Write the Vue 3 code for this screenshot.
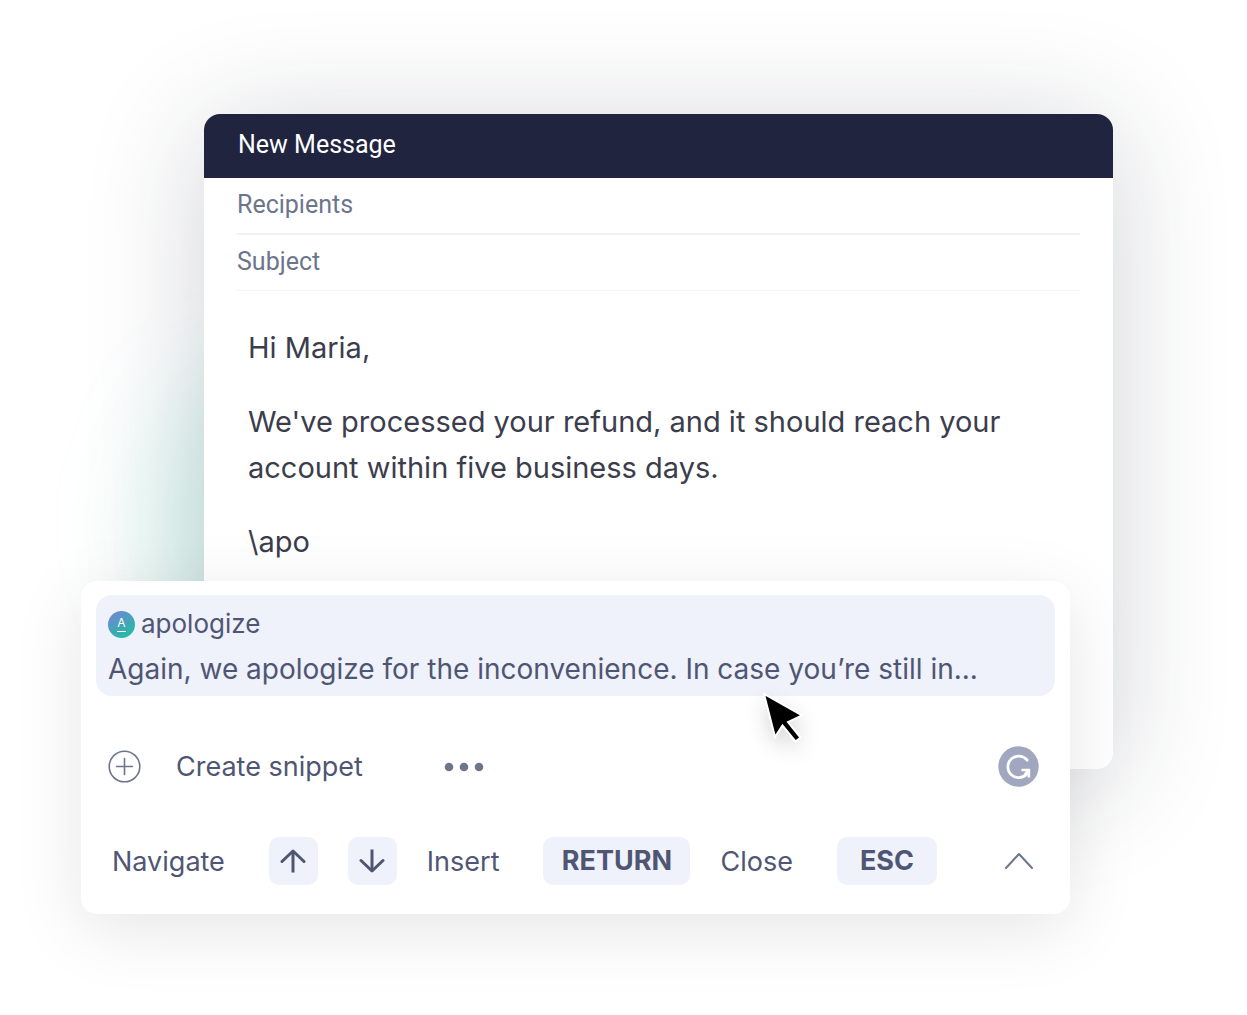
<template>
  <main class="scene">
    <form class="compose" @submit.prevent>
      <header class="compose-header">New Message</header>
      <div class="fields">
        <input v-model="recipients" class="field" type="text" aria-label="Recipients" placeholder="Recipients" />
        <input v-model="subject" class="field subject" type="text" aria-label="Subject" placeholder="Subject" />
      </div>
      <div class="message" contenteditable="true" spellcheck="false" role="textbox" aria-multiline="true" aria-label="Message">
        <p v-for="(text, idx) in paragraphs" :key="idx">{{ text }}</p>
      </div>
    </form>

    <section class="panel">
      <button type="button" class="snippet">
        <span class="snippet-title">
          <span class="avatar">A</span>
          <span>{{ snippet.name }}</span>
        </span>
        <span class="snippet-text">{{ snippet.text }}</span>
      </button>

      <div class="actions">
        <button type="button" class="create">
          <svg width="33" height="33" viewBox="0 0 33 33" fill="none" stroke="#6d758d">
            <circle cx="16.5" cy="16.5" r="15.3" stroke-width="1.6" />
            <path d="M16.5 8.5v16M8.5 16.5h16" stroke-width="1.6" stroke-linecap="round" />
          </svg>
          <span>Create snippet</span>
        </button>
        <button type="button" class="more" aria-label="More">
          <svg width="40" height="10" viewBox="0 0 40 10" fill="#6d758d">
            <circle cx="5" cy="5" r="4.3" />
            <circle cx="20" cy="5" r="4.3" />
            <circle cx="35" cy="5" r="4.3" />
          </svg>
        </button>
        <button type="button" class="brand" aria-label="Assistant">
          <svg width="41" height="41" viewBox="0 0 41 41" fill="none">
            <circle cx="20.5" cy="20.5" r="20.2" fill="#a1a7be" />
            <path d="M29.2 14.2A10.8 10.8 0 1 0 28.8 28" stroke="#fff" stroke-width="2.7" stroke-linecap="round" />
            <path d="M23.5 24H30.8V31.5" stroke="#fff" stroke-width="2.7" />
            <path d="M30 24.5L26.5 29.5" stroke="#fff" stroke-width="2.7" />
          </svg>
        </button>
      </div>

      <div class="shortcuts">
        <span class="label">Navigate</span>
        <kbd class="key arrow">
          <svg width="26" height="26" viewBox="0 0 26 26" fill="none" stroke="#4f5673" stroke-width="3">
            <path d="M13 24.5V3" />
            <path d="M2 13.5L13 3L24 13.5" stroke-linecap="round" stroke-linejoin="round" />
          </svg>
        </kbd>
        <kbd class="key arrow">
          <svg width="26" height="26" viewBox="0 0 26 26" fill="none" stroke="#4f5673" stroke-width="3">
            <path d="M13 1.5V23" />
            <path d="M2 12.5L13 23L24 12.5" stroke-linecap="round" stroke-linejoin="round" />
          </svg>
        </kbd>
        <span class="label">Insert</span>
        <kbd class="key return">RETURN</kbd>
        <span class="label">Close</span>
        <kbd class="key esc">ESC</kbd>
        <button type="button" class="collapse" aria-label="Collapse">
          <svg width="30" height="18" viewBox="0 0 30 18" fill="none" stroke="#6d758d" stroke-width="2" stroke-linecap="round" stroke-linejoin="round">
            <path d="M2 16L15 2L28 16" />
          </svg>
        </button>
      </div>

      <svg class="cursor" width="44" height="54" viewBox="0 0 44 54">
        <path
          d="M2 1L13 44L20.5 32.5L33.5 48.5L38.5 44.5L26 29L40 22.5Z"
          fill="#000"
          stroke="#fff"
          stroke-width="2"
        />
      </svg>
    </section>
  </main>
</template>

<script setup>
import { ref } from 'vue'

const recipients = ref('')
const subject = ref('')

const paragraphs = [
  'Hi Maria,',
  "We've processed your refund, and it should reach your account within five business days.",
  '\\apo'
]

const snippet = {
  name: 'apologize',
  text: 'Again, we apologize for the inconvenience. In case you’re still in...'
}
</script>

<style>
body {
  margin: 0;
  background: #fff;
}
</style>

<style scoped>
* {
  box-sizing: border-box;
}

.scene {
  position: relative;
  z-index: 0;
  overflow: hidden;
  padding: 114px 134px 101px 81px;
  font-family: Inter, sans-serif;
  color: #4f5673;
}

button {
  padding: 0;
  border: 0;
  background: none;
  color: inherit;
  font: inherit;
  cursor: pointer;
}

svg {
  display: block;
}

.compose {
  position: relative;
  min-height: 655px;
  margin-left: 123px;
  border-radius: 16px;
  background: #fff;
  box-shadow: 0 12px 120px rgba(32, 36, 62, 0.2);
}

/* green glow behind the window's left edge */
.compose::before {
  content: '';
  position: absolute;
  z-index: -1;
  left: -60px;
  top: 250px;
  width: 240px;
  height: 320px;
  border-radius: 50%;
  background: rgba(21, 195, 154, 0.14);
  filter: blur(45px);
}

.compose-header {
  height: 64px;
  padding: 0 34px;
  border-radius: 16px 16px 0 0;
  background: #20243e;
  color: #fff;
  font-family: Roboto, sans-serif;
  font-size: 25px;
  line-height: 62px;
}

.fields {
  padding: 0 33px;
}

.field {
  display: block;
  width: 100%;
  height: 57px;
  padding: 0 0 2px;
  border: 0;
  border-bottom: 2px solid #eff1f9;
  outline: 0;
  background: none;
  color: #6d758d;
  font-family: Roboto, sans-serif;
  font-size: 25px;
}

.subject {
  height: 56px;
  border-bottom: 1px solid #f3f4f8;
}

.field::placeholder {
  color: #6d758d;
  opacity: 1;
}

.message {
  padding: 34px 44px 0;
  outline: 0;
  color: #3b3d4d;
  font-size: 29px;
  line-height: 46px;
}

.message p {
  margin: 0 0 28px;
}

.panel {
  position: relative;
  margin: -188px 43px 0 0;
  padding: 14px 15px 29px;
  border-radius: 16px;
  background: #fff;
  box-shadow: 0 16px 70px rgba(0, 0, 0, 0.1);
}

.snippet {
  display: flex;
  flex-direction: column;
  width: 100%;
  height: 101px;
  padding: 9px 12px;
  border-radius: 16px;
  background: #eff1fb;
  text-align: left;
}

.snippet-title {
  display: flex;
  align-items: center;
  gap: 6px;
  font-size: 26px;
  line-height: 40px;
}

.snippet-text {
  font-size: 28px;
  line-height: 50px;
  white-space: nowrap;
}

.avatar {
  position: relative;
  width: 27px;
  height: 27px;
  border-radius: 50%;
  background: linear-gradient(150deg, #7a83d8 5%, #4aa0bd 45%, #1fbf9f 90%);
  color: #fff;
  font-size: 12px;
  line-height: 23px;
  text-align: center;
}

.avatar::after {
  content: '';
  position: absolute;
  left: 9px;
  right: 9px;
  bottom: 6px;
  height: 1px;
  background: #fff;
}

.actions {
  display: flex;
  align-items: center;
  height: 41px;
  margin-top: 50px;
  padding: 0 16px 0 12px;
  font-size: 27px;
}

.create {
  display: flex;
  align-items: center;
  gap: 35px;
}

.more {
  margin-left: 81px;
}

.brand {
  margin-left: auto;
}

.shortcuts {
  display: flex;
  align-items: center;
  height: 48px;
  margin-top: 50px;
  padding: 0 21px 0 16px;
  font-size: 27px;
}

.label {
  margin-right: 44px;
}

.key {
  display: flex;
  align-items: center;
  justify-content: center;
  height: 48px;
  border-radius: 10px;
  background: #eff1fb;
  font-family: Inter, sans-serif;
  font-weight: 700;
  line-height: 44px;
}

.arrow {
  width: 49px;
  margin-right: 30px;
}

.return {
  width: 147px;
  margin-right: 30px;
}

.esc {
  width: 100px;
}

.collapse {
  margin-left: auto;
}

.cursor {
  position: absolute;
  left: 681px;
  top: 112px;
  filter: drop-shadow(0 8px 10px rgba(0, 0, 0, 0.16));
}
</style>
